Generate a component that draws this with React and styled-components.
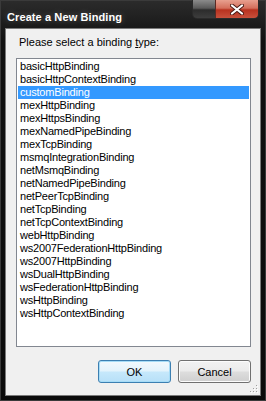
import styled, { createGlobalStyle } from "styled-components";

const GlobalStyle = createGlobalStyle`
  html, body {
    margin: 0;
    padding: 0;
    background: #000;
  }
  * {
    box-sizing: border-box;
  }
`;

const bindings = [
  "basicHttpBinding",
  "basicHttpContextBinding",
  "customBinding",
  "mexHttpBinding",
  "mexHttpsBinding",
  "mexNamedPipeBinding",
  "mexTcpBinding",
  "msmqIntegrationBinding",
  "netMsmqBinding",
  "netNamedPipeBinding",
  "netPeerTcpBinding",
  "netTcpBinding",
  "netTcpContextBinding",
  "webHttpBinding",
  "ws2007FederationHttpBinding",
  "ws2007HttpBinding",
  "wsDualHttpBinding",
  "wsFederationHttpBinding",
  "wsHttpBinding",
  "wsHttpContextBinding",
];

const Window = styled.div`
  width: 266px;
  height: 401px;
  display: flex;
  flex-direction: column;
  background: linear-gradient(180deg, #2b2b2b 0%, #111 40px, #0b0b0b 100%);
  border: 1px solid #3a3a3a;
  font-family: "Liberation Sans", Arial, sans-serif;
`;

const TitleBar = styled.div`
  height: 27px;
  flex: none;
  display: flex;
  justify-content: space-between;
  align-items: flex-start;
  padding-left: 6px;
  padding-right: 6px;
`;

const Title = styled.div`
  margin-top: 9px;
  color: #fff;
  font-size: 11px;
  font-weight: bold;
  line-height: 14px;
  letter-spacing: 0.1px;
  text-shadow: 0 0 6px rgba(255, 255, 255, 0.25);
`;

const CaptionButtons = styled.div`
  display: flex;
  height: 19px;
  margin-top: -1px;
  border: 1px solid #2a2a2a;
  border-top: none;
  border-radius: 0 0 5px 5px;
  overflow: hidden;
`;

const GlassCap = styled.div`
  width: 22px;
  background: linear-gradient(180deg, #8b8b8b 0%, #5a5a5a 45%, #2c2c2c 55%, #3d3d3d 100%);
`;

const CloseCap = styled.div`
  width: 43px;
  display: flex;
  align-items: center;
  justify-content: center;
  border-left: 1px solid #5a2a24;
  background: linear-gradient(180deg, #e8a08f 0%, #d46f5c 45%, #b8321f 55%, #c8503c 100%);
`;

const Content = styled.div`
  flex: 1;
  position: relative;
  margin: 0 4px 4px 4px;
  border: 1px solid #7a7a7a;
  background: #f0f0f0;
  padding: 7px 9px 0 10px;
  display: flex;
  flex-direction: column;
`;

const Prompt = styled.div`
  padding-left: 3px;
  font-size: 11px;
  line-height: 13px;
  color: #000;

  u {
    text-decoration: underline;
  }
`;

const ListBox = styled.div`
  margin-top: 9px;
  height: 289px;
  border: 1px solid #828790;
  background: #fff;
  padding: 1px;
`;

const Item = styled.div`
  height: 13px;
  line-height: 13px;
  padding-left: 2px;
  font-size: 11px;
  letter-spacing: -0.2px;
  white-space: nowrap;
  color: ${(p) => (p.$selected ? "#fff" : "#000")};
  background: ${(p) => (p.$selected ? "#3399ff" : "transparent")};
`;

const ButtonRow = styled.div`
  display: flex;
  justify-content: flex-end;
  gap: 7px;
  margin-top: 13px;
`;

const Button = styled.div`
  width: 73px;
  height: 23px;
  display: flex;
  align-items: center;
  justify-content: center;
  font-size: 11px;
  color: #000;
  border-radius: 3px;
  border: 1px solid ${(p) => (p.$default ? "#3c7fb1" : "#707070")};
  background: ${(p) =>
    p.$default
      ? "linear-gradient(180deg, #f2f9fd 0%, #e3f3fc 48%, #c6e8fb 52%, #b7e0f8 100%)"
      : "linear-gradient(180deg, #f2f2f2 0%, #ebebeb 48%, #dddddd 52%, #cfcfcf 100%)"};
  box-shadow: inset 0 0 0 1px ${(p) => (p.$default ? "#a6dcf7" : "#fcfcfc")};
`;

const Grip = styled.svg`
  position: absolute;
  right: 1px;
  bottom: 1px;
`;

const CloseGlyph = () => (
  <svg width="14" height="11" viewBox="0 0 14 11">
    <path
      d="M2 1.5 L12 9.5 M12 1.5 L2 9.5"
      stroke="#4a1a14"
      strokeWidth="4"
      strokeLinecap="round"
    />
    <path
      d="M2 1.5 L12 9.5 M12 1.5 L2 9.5"
      stroke="#fff"
      strokeWidth="2.2"
      strokeLinecap="round"
    />
  </svg>
);

const ResizeGrip = () => (
  <Grip width="10" height="10" viewBox="0 0 10 10">
    {[
      [8, 2],
      [8, 5],
      [5, 5],
      [8, 8],
      [5, 8],
      [2, 8],
    ].map(([x, y], i) => (
      <g key={i}>
        <rect x={x} y={y} width="1" height="1" fill="#fff" />
        <rect x={x - 1} y={y - 1} width="1" height="1" fill="#a0a0a0" />
      </g>
    ))}
  </Grip>
);

const App = () => {
  const selected = "customBinding";
  return (
    <>
      <GlobalStyle />
      <Window>
        <TitleBar>
          <Title>Create a New Binding</Title>
          <CaptionButtons>
            <GlassCap />
            <CloseCap>
              <CloseGlyph />
            </CloseCap>
          </CaptionButtons>
        </TitleBar>
        <Content>
          <Prompt>
            Please select a binding <u>t</u>ype:
          </Prompt>
          <ListBox>
            {bindings.map((name) => (
              <Item key={name} $selected={name === selected}>
                {name}
              </Item>
            ))}
          </ListBox>
          <ButtonRow>
            <Button $default>OK</Button>
            <Button>Cancel</Button>
          </ButtonRow>
          <ResizeGrip />
        </Content>
      </Window>
    </>
  );
};

export default App;
